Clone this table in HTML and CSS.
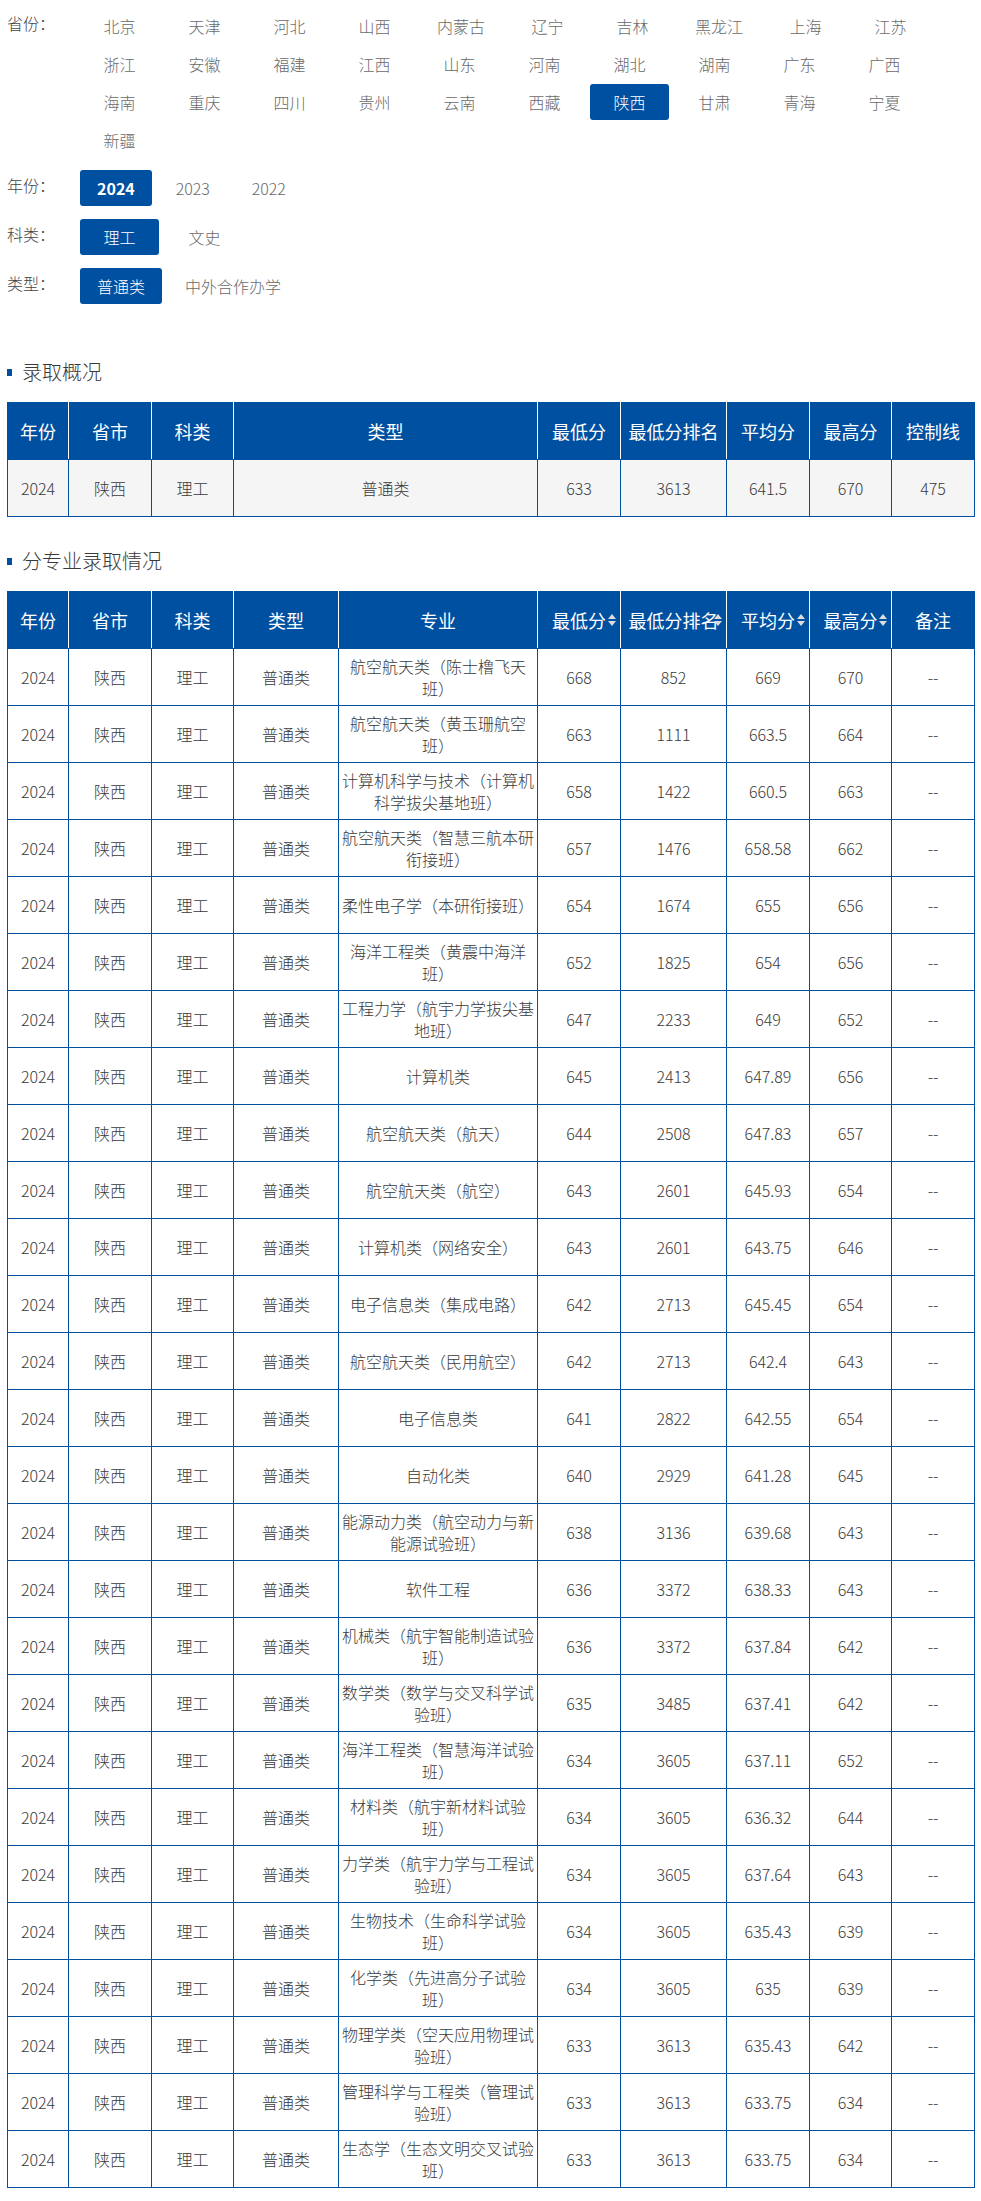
FILE: index.html
```html
<!DOCTYPE html>
<html lang="zh-CN">
<head>
<meta charset="utf-8">
<title>录取分数</title>
<link rel="stylesheet" href="styles.css">
</head>
<body>
<div class="page">
  <div class="filter province">
    <div class="filter-label">省份：</div>
    <div class="options">
      <span class="opt">北京</span><span class="opt">天津</span><span class="opt">河北</span><span class="opt">山西</span><span class="opt">内蒙古</span><span class="opt">辽宁</span><span class="opt">吉林</span><span class="opt">黑龙江</span><span class="opt">上海</span><span class="opt">江苏</span>
      <span class="opt">浙江</span><span class="opt">安徽</span><span class="opt">福建</span><span class="opt">江西</span><span class="opt">山东</span><span class="opt">河南</span><span class="opt">湖北</span><span class="opt">湖南</span><span class="opt">广东</span><span class="opt">广西</span>
      <span class="opt">海南</span><span class="opt">重庆</span><span class="opt">四川</span><span class="opt">贵州</span><span class="opt">云南</span><span class="opt">西藏</span><span class="opt active">陕西</span><span class="opt">甘肃</span><span class="opt">青海</span><span class="opt">宁夏</span>
      <span class="opt">新疆</span>
    </div>
  </div>
  <div class="filter">
    <div class="filter-label">年份：</div>
    <div class="options">
      <span class="opt year active">2024</span><span class="opt year">2023</span><span class="opt year">2022</span>
    </div>
  </div>
  <div class="filter">
    <div class="filter-label">科类：</div>
    <div class="options">
      <span class="opt active">理工</span><span class="opt">文史</span>
    </div>
  </div>
  <div class="filter">
    <div class="filter-label">类型：</div>
    <div class="options">
      <span class="opt active">普通类</span><span class="opt">中外合作办学</span>
    </div>
  </div>

  <h2 class="section-title first"><span class="marker"></span>录取概况</h2>
  <table class="data summary">
    <colgroup>
      <col class="c-year"><col class="c-prov"><col class="c-subj"><col class="c-type-wide"><col class="c-min"><col class="c-rank"><col class="c-avg"><col class="c-max"><col class="c-last">
    </colgroup>
    <thead>
      <tr><th>年份</th><th>省市</th><th>科类</th><th>类型</th><th>最低分</th><th>最低分排名</th><th>平均分</th><th>最高分</th><th>控制线</th></tr>
    </thead>
    <tbody>
      <tr><td>2024</td><td>陕西</td><td>理工</td><td>普通类</td><td>633</td><td>3613</td><td>641.5</td><td>670</td><td>475</td></tr>
    </tbody>
  </table>

  <h2 class="section-title"><span class="marker"></span>分专业录取情况</h2>
  <table class="data majors">
    <colgroup>
      <col class="c-year"><col class="c-prov"><col class="c-subj"><col class="c-type"><col class="c-major"><col class="c-min"><col class="c-rank"><col class="c-avg"><col class="c-max"><col class="c-last">
    </colgroup>
    <thead>
      <tr><th>年份</th><th>省市</th><th>科类</th><th>类型</th><th>专业</th><th class="sortable">最低分<span class="sort"></span></th><th class="sortable">最低分排名<span class="sort"></span></th><th class="sortable">平均分<span class="sort"></span></th><th class="sortable">最高分<span class="sort"></span></th><th>备注</th></tr>
    </thead>
    <tbody>
      <tr><td>2024</td><td>陕西</td><td>理工</td><td>普通类</td><td>航空航天类（陈士橹飞天班）</td><td>668</td><td>852</td><td>669</td><td>670</td><td>--</td></tr>
      <tr><td>2024</td><td>陕西</td><td>理工</td><td>普通类</td><td>航空航天类（黄玉珊航空班）</td><td>663</td><td>1111</td><td>663.5</td><td>664</td><td>--</td></tr>
      <tr><td>2024</td><td>陕西</td><td>理工</td><td>普通类</td><td>计算机科学与技术（计算机科学拔尖基地班）</td><td>658</td><td>1422</td><td>660.5</td><td>663</td><td>--</td></tr>
      <tr><td>2024</td><td>陕西</td><td>理工</td><td>普通类</td><td>航空航天类（智慧三航本研衔接班）</td><td>657</td><td>1476</td><td>658.58</td><td>662</td><td>--</td></tr>
      <tr><td>2024</td><td>陕西</td><td>理工</td><td>普通类</td><td>柔性电子学（本研衔接班）</td><td>654</td><td>1674</td><td>655</td><td>656</td><td>--</td></tr>
      <tr><td>2024</td><td>陕西</td><td>理工</td><td>普通类</td><td>海洋工程类（黄震中海洋班）</td><td>652</td><td>1825</td><td>654</td><td>656</td><td>--</td></tr>
      <tr><td>2024</td><td>陕西</td><td>理工</td><td>普通类</td><td>工程力学（航宇力学拔尖基地班）</td><td>647</td><td>2233</td><td>649</td><td>652</td><td>--</td></tr>
      <tr><td>2024</td><td>陕西</td><td>理工</td><td>普通类</td><td>计算机类</td><td>645</td><td>2413</td><td>647.89</td><td>656</td><td>--</td></tr>
      <tr><td>2024</td><td>陕西</td><td>理工</td><td>普通类</td><td>航空航天类（航天）</td><td>644</td><td>2508</td><td>647.83</td><td>657</td><td>--</td></tr>
      <tr><td>2024</td><td>陕西</td><td>理工</td><td>普通类</td><td>航空航天类（航空）</td><td>643</td><td>2601</td><td>645.93</td><td>654</td><td>--</td></tr>
      <tr><td>2024</td><td>陕西</td><td>理工</td><td>普通类</td><td>计算机类（网络安全）</td><td>643</td><td>2601</td><td>643.75</td><td>646</td><td>--</td></tr>
      <tr><td>2024</td><td>陕西</td><td>理工</td><td>普通类</td><td>电子信息类（集成电路）</td><td>642</td><td>2713</td><td>645.45</td><td>654</td><td>--</td></tr>
      <tr><td>2024</td><td>陕西</td><td>理工</td><td>普通类</td><td>航空航天类（民用航空）</td><td>642</td><td>2713</td><td>642.4</td><td>643</td><td>--</td></tr>
      <tr><td>2024</td><td>陕西</td><td>理工</td><td>普通类</td><td>电子信息类</td><td>641</td><td>2822</td><td>642.55</td><td>654</td><td>--</td></tr>
      <tr><td>2024</td><td>陕西</td><td>理工</td><td>普通类</td><td>自动化类</td><td>640</td><td>2929</td><td>641.28</td><td>645</td><td>--</td></tr>
      <tr><td>2024</td><td>陕西</td><td>理工</td><td>普通类</td><td>能源动力类（航空动力与新能源试验班）</td><td>638</td><td>3136</td><td>639.68</td><td>643</td><td>--</td></tr>
      <tr><td>2024</td><td>陕西</td><td>理工</td><td>普通类</td><td>软件工程</td><td>636</td><td>3372</td><td>638.33</td><td>643</td><td>--</td></tr>
      <tr><td>2024</td><td>陕西</td><td>理工</td><td>普通类</td><td>机械类（航宇智能制造试验班）</td><td>636</td><td>3372</td><td>637.84</td><td>642</td><td>--</td></tr>
      <tr><td>2024</td><td>陕西</td><td>理工</td><td>普通类</td><td>数学类（数学与交叉科学试验班）</td><td>635</td><td>3485</td><td>637.41</td><td>642</td><td>--</td></tr>
      <tr><td>2024</td><td>陕西</td><td>理工</td><td>普通类</td><td>海洋工程类（智慧海洋试验班）</td><td>634</td><td>3605</td><td>637.11</td><td>652</td><td>--</td></tr>
      <tr><td>2024</td><td>陕西</td><td>理工</td><td>普通类</td><td>材料类（航宇新材料试验班）</td><td>634</td><td>3605</td><td>636.32</td><td>644</td><td>--</td></tr>
      <tr><td>2024</td><td>陕西</td><td>理工</td><td>普通类</td><td>力学类（航宇力学与工程试验班）</td><td>634</td><td>3605</td><td>637.64</td><td>643</td><td>--</td></tr>
      <tr><td>2024</td><td>陕西</td><td>理工</td><td>普通类</td><td>生物技术（生命科学试验班）</td><td>634</td><td>3605</td><td>635.43</td><td>639</td><td>--</td></tr>
      <tr><td>2024</td><td>陕西</td><td>理工</td><td>普通类</td><td>化学类（先进高分子试验班）</td><td>634</td><td>3605</td><td>635</td><td>639</td><td>--</td></tr>
      <tr><td>2024</td><td>陕西</td><td>理工</td><td>普通类</td><td>物理学类（空天应用物理试验班）</td><td>633</td><td>3613</td><td>635.43</td><td>642</td><td>--</td></tr>
      <tr><td>2024</td><td>陕西</td><td>理工</td><td>普通类</td><td>管理科学与工程类（管理试验班）</td><td>633</td><td>3613</td><td>633.75</td><td>634</td><td>--</td></tr>
      <tr><td>2024</td><td>陕西</td><td>理工</td><td>普通类</td><td>生态学（生态文明交叉试验班）</td><td>633</td><td>3613</td><td>633.75</td><td>634</td><td>--</td></tr>
    </tbody>
  </table>
</div>
</body>
</html>
```

FILE: styles.css
```css
html, body {
  margin: 0;
  padding: 0;
  background: #fff;
}

body {
  font-family: "Noto Sans CJK SC", "Noto Sans", "Liberation Sans", sans-serif;
  color: #333;
  font-size: 16px;
  font-weight: 300;
}

.page {
  padding: 8px 7px 10px 7px;
}

/* ---------- filters ---------- */
.filter {
  display: flex;
  align-items: flex-start;
  margin-bottom: 13px;
}

.filter.province {
  margin-bottom: 12px;
}

.filter-label {
  flex: none;
  width: 73px;
  font-size: 16px;
  line-height: 30px;
  color: #444;
}

.options {
  flex: 1;
  display: flex;
  flex-wrap: wrap;
  gap: 2px 6px;
}

.opt {
  display: block;
  box-sizing: border-box;
  min-width: 79px;
  height: 36px;
  padding: 0 17px;
  line-height: 36px;
  text-align: center;
  font-size: 16px;
  color: #6a6a6a;
  border-radius: 3px;
  white-space: nowrap;
}

.opt.year {
  min-width: 70px;
}

.opt.active {
  background: #0050a1;
  color: #fff;
}

.opt.year.active {
  font-weight: bold;
}

/* ---------- section titles ---------- */
.section-title {
  display: flex;
  align-items: center;
  margin: 29px 0 15px 0;
  font-size: 20px;
  line-height: 30px;
  font-weight: 300;
  color: #3a3a3a;
}

.section-title.first {
  margin-top: 53px;
}

.marker {
  display: block;
  width: 5px;
  height: 7px;
  margin-right: 10px;
  background: #0050a1;
}

/* ---------- tables ---------- */
.data {
  width: 967px;
  table-layout: fixed;
  border-collapse: collapse;
  border: 1px solid #0050a1;
}

.c-year { width: 61px; }
.c-prov { width: 83px; }
.c-subj { width: 82px; }
.c-type { width: 105px; }
.c-type-wide { width: 304px; }
.c-major { width: 199px; }
.c-min { width: 83px; }
.c-rank { width: 106px; }
.c-avg { width: 83px; }
.c-max { width: 82px; }
.c-last { width: 83px; }

.data tr {
  height: 57px;
}

.data th {
  position: relative;
  padding: 0;
  background: #0050a1;
  color: #fff;
  font-size: 18px;
  font-weight: 400;
  line-height: 24px;
  text-align: center;
  white-space: nowrap;
  border: 1px solid #fff;
  border-top-color: #0050a1;
  border-bottom-color: #0050a1;
}

.data th:first-child {
  border-left-color: #0050a1;
}

.data th:last-child {
  border-right-color: #0050a1;
}

.data td {
  padding: 0 2px;
  font-size: 16px;
  line-height: 22px;
  color: #3a3a3a;
  text-align: center;
  border: 1px solid #0050a1;
}

.summary td {
  background: #f5f5f5;
}

.sort {
  position: absolute;
  right: 4px;
  top: 50%;
  width: 8px;
  height: 12px;
  margin-top: -6px;
}

.sort::before,
.sort::after {
  content: "";
  position: absolute;
  left: 0;
  width: 0;
  height: 0;
  border-left: 4px solid transparent;
  border-right: 4px solid transparent;
}

.sort::before {
  top: 0;
  border-bottom: 5px solid #dcdcdc;
}

.sort::after {
  bottom: 0;
  border-top: 5px solid #dcdcdc;
}
```
